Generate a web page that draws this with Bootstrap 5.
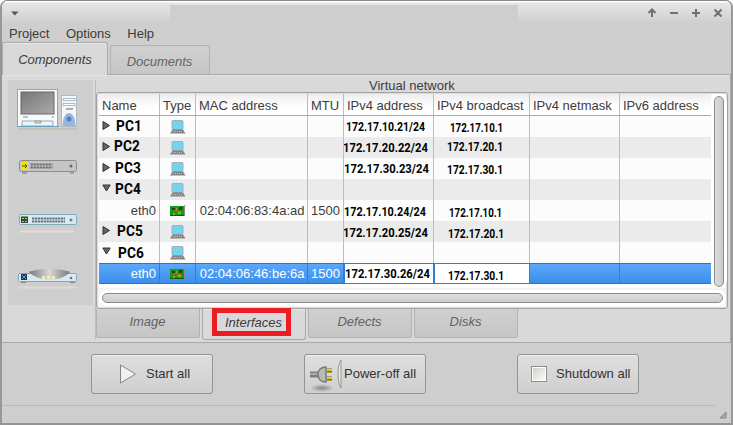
<!DOCTYPE html>
<html lang="en">
<head>
<meta charset="utf-8">
<title>Virtual network</title>
<link href="https://cdn.jsdelivr.net/npm/bootstrap@5.3.0/dist/css/bootstrap.min.css" rel="stylesheet">
<style>
body{width:733px;height:425px;overflow:hidden;background:#fff;color:#3c3c3c;font:13px/16px "Liberation Sans",Arial,sans-serif}
svg{display:block;flex:none}
.win{width:733px;height:425px;background:#cecece;border:1px solid #8a898b;border-left:2px solid #979797;border-right:2px solid #999;border-bottom:2px solid #949494;border-radius:7px 7px 0 0;overflow:hidden}
.titlebar{height:24px;flex:none;background:linear-gradient(#fff 0,#fff 1px,#e6e6e6 2px,#cecece 23px);padding-left:8px;padding-right:8px}
.title-blank{width:348px;height:20px;background:#cecece;margin-left:150px;margin-top:4px}
.menus{height:17px;flex:none;padding:1px 0 0 7px;gap:16.500px}
.menus span{height:16px}
.toptabs{height:32px;flex:none;gap:2px}
.wtab{font-style:italic;border:1px solid #b2b2b2;color:#636363;background:linear-gradient(#d0d0d0,#c6c6c6)}
.wtab.on{background:#d9d9d9;color:#3c3c3c;border-color:#aaa;box-shadow:inset 0 1px #e8e8e8}
.t1{width:106px;height:33px;border-bottom:0!important;border-radius:3px 3px 0 0;z-index:2;padding:2px 0 0 0}
.t2{width:100px;height:29px;border-bottom:0!important;border-radius:3px 3px 0 0;padding:3px 1px 0 0}
.pane{height:269px;flex:none;background:#d9d9d9;border:1px solid #aaa;border-left:0;box-shadow:inset 0 1px #e2e2e2}
.palette{width:85px;height:225px;background:#cecece;margin:5px 0 0 6px;padding-top:9px;flex:none}
.inner{width:633px;margin-left:2px;margin-top:5px;border-left:1px solid #bcbcbc;height:259px}
.caption-row{height:12px;line-height:12px;padding-left:273px}
.frame{width:632px;height:217px;border:1px solid #a2a2a2;border-radius:3px;background:#f4f4f4;padding:1px 1px 1px 2px;box-shadow:inset 0 0 0 1px #ddd}
.viewport-row{height:194px;background:#fcfcfc}
.grid{width:612px;flex:none;table-layout:fixed;border-collapse:separate;border-spacing:0;background:#fcfcfc}
.grid th{height:22px;padding:2px 0 0 3px;font-weight:400;border-right:1px solid #bdbdbd;border-bottom:1px solid #a9a9a9;background:linear-gradient(#ededed,#fff 60%);white-space:nowrap;line-height:18px}
.grid td{height:21px;padding:0 3px;border-right:1px solid #bdbdbd;white-space:nowrap;line-height:19px;overflow:hidden}
.grid th:last-child,.grid td:last-child{border-right:0}
.grid tr:nth-child(even) td{background:#ebebeb}
.grid tbody tr.sel td{background:linear-gradient(#5ba8fb,#3b8eea);color:#fff;border-top:1px solid #2b73c4;border-bottom:1px solid #2b73c4;border-right-color:#367fce;line-height:19px}
.grid td.ip{padding:0}
.grid tr.sel td.ip{background:#fff!important;border-width:1px 1px 1px 1px!important;border-style:solid;border-color:#2f7fd4!important}
.ipt,.pc{display:block;width:max-content;color:#000;font:700 12.3px/18px Roboto,sans-serif;transform-origin:0 50%;height:18px}
.pc{font-size:15.5px;transform:scaleX(.88);letter-spacing:.2px}
.tree{height:19px}
.vtrack{width:16px;height:194px;background:#fff;padding:2px 3px;border-radius:8px}
.vtrack div{width:10px;height:191px;border:1px solid #8c8c8c;border-radius:5px;background:linear-gradient(90deg,#dedede,#c9c9c9)}
.htrack{height:16px;margin-top:2px;padding:3px;background:#fff;border-radius:8px}
.htrack div{height:10px;width:621px;border:1px solid #8c8c8c;border-radius:5px;background:linear-gradient(#dedede,#cdcdcd)}
.lowtabs{gap:2px;height:31px}
.lowtabs .wtab{width:104px;height:29px;border-top:0;border-radius:0 0 3px 3px;padding:0 1px 2px 0}
.lowtabs .on{height:31px;padding:0 6px 0 0}
.hl{border:5px solid #ed1c24;width:79px;height:28px;line-height:20px;margin-top:-1px;padding-left:5px}
.actions{height:62px;flex:none;padding:11px 0 0 89px;gap:91px}
.wbtn{width:122px;height:40px;border:1px solid #949494;border-radius:3px;background:linear-gradient(#dfdfdf,#cfcfcf);box-shadow:inset 0 1px #efefef;font-size:13px;line-height:16px;color:#333;padding:0}
.wbtn.stop{padding-left:13px}
.status{border-top:1px solid #b9b9b9;margin-right:16px}
.status-wrap{height:18px;flex:none}
.mac{padding-right:2.500px}
.mtu{padding-right:3px}
</style>
<script src="https://cdn.jsdelivr.net/npm/bootstrap@5.3.0/dist/js/bootstrap.bundle.min.js"></script>
</head>
<body>
<svg width="0" height="0" class="position-absolute">
<defs>
<linearGradient id="scr" x2="1" y2="1"><stop stop-color="#777"/><stop offset="1" stop-color="#aaa"/></linearGradient>
<linearGradient id="dome"><stop stop-color="#777"/><stop offset=".5" stop-color="#d8d8d8"/><stop offset="1" stop-color="#777"/></linearGradient>
<symbol id="pcicon" viewBox="0 0 17 14"><rect x="3" y=".5" width="11" height="9" rx="1" fill="#74d3ef" stroke="#9eb1b7"/><path d="M3.500 9.500h10.500l2.500 4H1z" fill="#858585"/><path d="M4 11.500h10" stroke="#bbb" stroke-dasharray="1 1"/></symbol>
<symbol id="nic" viewBox="0 0 16 12"><rect y="1" width="14" height="9" fill="#159a17"/><path d="M0 10.500h14" stroke="#175510"/><path d="M2 3h3v2H2zM9 2h3v3H9z" fill="#0b4b0d"/><path d="M3 7l3-2 2 2 3-1M7 3h1" stroke="#c65a23" stroke-width="1.500" fill="none"/><path d="M3 9h2M8 8h3M6 4h1" stroke="#dfdc43"/><path d="M14.500 11V1l1-1" stroke="#8b8b8b" fill="none"/></symbol>
<symbol id="closed" viewBox="0 0 9 11"><path d="M1 1.500v8l6.500-4z" fill="#666" stroke="#333"/></symbol>
<symbol id="open" viewBox="0 0 9 11"><path d="M.8 2h7.400L4.500 8z" fill="#666" stroke="#333"/></symbol>
</defs></svg>
<div class="win d-flex flex-column">
  <div class="titlebar d-flex">
    <svg width="10" height="24"><path d="M1 10.500h7.600L4.800 14.500z" fill="#555"/></svg>
    <div class="title-blank"></div>
    <svg class="ms-auto" width="76" height="24" fill="none" stroke="#707070" stroke-width="2"><path d="M5 16V10M1.500 12L5 8.500 8.500 12M23 12h8M45 12h8M49 8v8M67.500 8.500l7 7M74.500 8.500l-7 7"/></svg>
  </div>
  <nav class="menus d-flex"><span>Project</span><span>Options</span><span>Help</span></nav>
  <div class="toptabs d-flex align-items-end">
    <div class="wtab on t1 d-flex align-items-center justify-content-center align-self-start position-relative">Components</div>
    <div class="wtab t2 d-flex align-items-center justify-content-center">Documents</div>
  </div>
  <main class="pane d-flex">
    <aside class="palette">
      <svg width="85" height="216" viewBox="0 0 85 216">
        <rect x="9.500" y=".5" width="40" height="37" fill="#f7f9fa" stroke="#9da4a8"/><rect x="13" y="3" width="33" height="22" fill="url(#scr)" stroke="#666"/>
        <path d="M15 28h5M44 28h2" stroke="#888"/><path d="M14 32h31v5H14z" fill="#eef4f7" stroke="#91adba"/><rect x="27" y="32" width="6" height="2" fill="#ddd" stroke="#777" stroke-width=".6"/><path d="M9 37.500h42" stroke="#68a0b9"/>
        <rect x="53.500" y="6.500" width="15" height="31" fill="#f4f7fa" stroke="#b2b8bc"/><path d="M55 9.500h12v2H55zM55 14.500h12v2H55z" fill="#fff" stroke="#899db4" stroke-width=".7"/><path d="M58 20h7" stroke="#666"/><path d="M54.500 37c0-8 3-13 6.500-13s6.500 5 6.500 13z" fill="#98b7de"/><circle cx="61" cy="30" r="2.500" fill="#4e82c0"/><path d="M10 40h59" stroke="#c5c0b6" stroke-width="2"/>
        <g transform="translate(11 71)"><rect x=".5" y=".5" width="57" height="11" rx="2" fill="#c5c5c5" stroke="#8c8c8c"/><rect x="2" y="2" width="7" height="8" fill="#f3e500"/><path d="M3 6h5M6 4l2 2-2 2" stroke="#554a00" fill="none"/><path d="M11.500 4.500h22M11.500 7.500h22" stroke="#6d6d6d" stroke-width="2" stroke-dasharray="2.300 .7"/><circle cx="52" cy="6" r="1.500" fill="#666"/><path d="M3 13h5M51 13h4" stroke="#777"/><path d="M1 15.500h57" stroke="#d8d2c6"/></g>
        <g transform="translate(11 125)"><rect x=".5" y=".5" width="57" height="10" rx="1" fill="#d7eaf1" stroke="#7fabbd"/><rect x="2" y="2.500" width="7" height="6.500" fill="#33463b"/><path d="M3 4.500h5M3 7.500h5" stroke="#b2cf4e" stroke-dasharray="2 1"/><path d="M13 4.500h33M13 7.500h33" stroke="#6a7377" stroke-width="2" stroke-dasharray="2.300 .6"/><circle cx="52" cy="6" r="1.500" fill="#777"/><path d="M1 17.500h54" stroke="#e3ddd2" stroke-width="2"/></g>
        <g transform="translate(10 181)"><rect x=".5" y="3.500" width="58" height="8" rx="1" fill="#d7eaf4" stroke="#7fa9bc"/><path d="M11 2c8-4 32-4 41 0-8 10-32 10-41 0z" fill="url(#dome)"/><path d="M24 7.500h14" stroke="#f1edb0" stroke-width="3" stroke-dasharray="3 2"/><rect x="3" y="4" width="6" height="6" fill="#193557"/><path d="M4 5l4 4M8 5l-4 4" stroke="#7499bd"/><circle cx="53" cy="8" r="1.300" fill="#777"/><path d="M3 12.500h5M52 12.500h5" stroke="#888"/><path d="M0 17.500h59" stroke="#e0d9ce" stroke-width="2"/></g>
      </svg>
    </aside>
    <section class="inner">
      <div class="caption-row">Virtual network</div>
      <div class="frame">
        <div class="viewport-row d-flex align-items-start">
          <table class="grid">
            <colgroup><col style="width:61px"><col style="width:36px"><col style="width:112px"><col style="width:36px"><col style="width:90px"><col style="width:96px"><col style="width:90px"><col style="width:91px"></colgroup>
            <thead><tr><th>Name</th><th>Type</th><th>MAC address</th><th>MTU</th><th>IPv4 address</th><th>IPv4 broadcast</th><th>IPv4 netmask</th><th>IPv6 address</th></tr></thead>
            <tbody id="rows"></tbody>
          </table>
          <div class="vtrack"><div></div></div>
        </div>
        <div class="htrack"><div></div></div>
      </div>
      <div class="lowtabs d-flex">
        <div class="wtab d-flex align-items-center justify-content-center">Image</div>
        <div class="wtab on d-flex align-items-start justify-content-center"><div class="hl text-center">Interfaces</div></div>
        <div class="wtab d-flex align-items-center justify-content-center">Defects</div>
        <div class="wtab d-flex align-items-center justify-content-center">Disks</div>
      </div>
    </section>
  </main>
  <div class="actions d-flex">
    <button class="wbtn d-flex align-items-center ps-4"><svg width="18" height="22" class="ms-1 me-2"><path d="M.5 2v18l15-9z" fill="#f1f1ee" stroke="#858585"/></svg>Start all</button>
    <button class="wbtn d-flex align-items-center"><svg width="39" height="36" viewBox="0 0 39 36"><defs><radialGradient id="sh"><stop stop-color="#888"/><stop offset="1" stop-color="#888" stop-opacity="0"/></radialGradient></defs><ellipse cx="17" cy="32" rx="12" ry="4" fill="url(#sh)"/><path d="M5 18.500h9" stroke="#7c7f7a" stroke-width="6"/><path d="M5 18h9" stroke="#b9bbb7" stroke-width="1.500"/><path d="M21 11c-5 0-8 3-8 7.500s3 7.500 8 7.500z" fill="#b9bbb6" stroke="#777b75" stroke-width="1.500"/><path d="M22 14.500h5M22 22.500h5" stroke="#7b6f00" stroke-width="4"/><path d="M22 14h5M22 22h5" stroke="#ead000" stroke-width="2"/><path d="M36 4c-4 5-4 23 0 28z" fill="#e7e6df" stroke="#96968f"/></svg>Power-off all</button>
    <button class="wbtn stop d-flex align-items-center"><svg width="17" height="17"><defs><linearGradient id="sq" x2="1" y2="1"><stop stop-color="#d2d2cc"/><stop offset="1" stop-color="#fafaf8"/></linearGradient></defs><rect x=".5" y=".5" width="15" height="15" fill="#fff" stroke="#8e8e8e"/><rect x="2" y="2" width="12" height="12" fill="url(#sq)"/></svg><span class="ms-2 ps-0">Shutdown all</span></button>
  </div>
  <footer class="status-wrap position-relative"><div class="status"></div><svg class="position-absolute end-0 bottom-0 me-1 mb-1" width="8" height="8"><path d="M7 1v6H1z" fill="#aaa" stroke="#888"/></svg></footer>
</div>
<script>
// [name, open, name x, name y, address, x, width, y, broadcast, x, width, y, mac]
const data = [
 ['PC1',0,3,0,'172.17.10.21/24',2,79,0,'172.17.10.1',16,53,1],
 ['PC2',0,1,-1,'172.17.20.22/24',-1,85,0,'172.17.20.1',13,56,-1],
 ['PC3',0,2,0,'172.17.30.23/24',0,85,0,'172.17.30.1',13,56,1],
 ['PC4',1,2,0,'',0,0,0,'',0,0,0],
 ['',0,0,0,'172.17.10.24/24',0,82,1,'172.17.10.1',15,53,2,'02:04:06:83:4a:ad'],
 ['PC5',0,4,0,'172.17.20.25/24',-1,85,1,'172.17.20.1',14,56,2],
 ['PC6',1,5,1,'',0,0,0,'',0,0,0],
 ['',0,0,0,'172.17.30.26/24',0,85,0,'172.17.30.1',13,56,2,'02:04:06:46:be:6a']
];
const ip = (t,x,w,y) => t ? `<span class="ipt" data-w="${w}" style="margin-left:${x}px;transform:translateY(${y}px)">${t}</span>` : '';
document.getElementById('rows').innerHTML = data.map((r,i) => {
  const mac = r[12] || '';
  const name = mac ? '<div class="text-end">eth0</div>'
    : `<div class="tree d-flex align-items-start"><svg width="9" height="11" style="margin-top:3px"><use href="#${r[1]?'open':'closed'}"/></svg><span class="pc" style="margin-left:${r[2]+2}px;margin-top:${r[3]}px">${r[0]}</span></div>`;
  const icon = mac ? '<svg width="16" height="12" class="mx-auto"><use href="#nic"/></svg>' : '<svg width="17" height="14" class="mx-auto"><use href="#pcicon"/></svg>';
  return `<tr class="${i===7?'sel':''}"><td>${name}</td><td>${icon}</td><td class="text-end px-0"><span class="mac">${mac}</span></td><td class="text-end px-0"><span class="mtu">${mac?'1500':''}</span></td><td class="ip">${ip(r[4],r[5],r[6],r[7])}</td><td class="ip">${ip(r[8],r[9],r[10],r[11])}</td><td></td><td></td></tr>`;
}).join('');
document.querySelectorAll('.ipt').forEach(e => { e.style.transform += ` scaleX(${e.dataset.w / e.offsetWidth})`; });
</script>
</body>
</html>
